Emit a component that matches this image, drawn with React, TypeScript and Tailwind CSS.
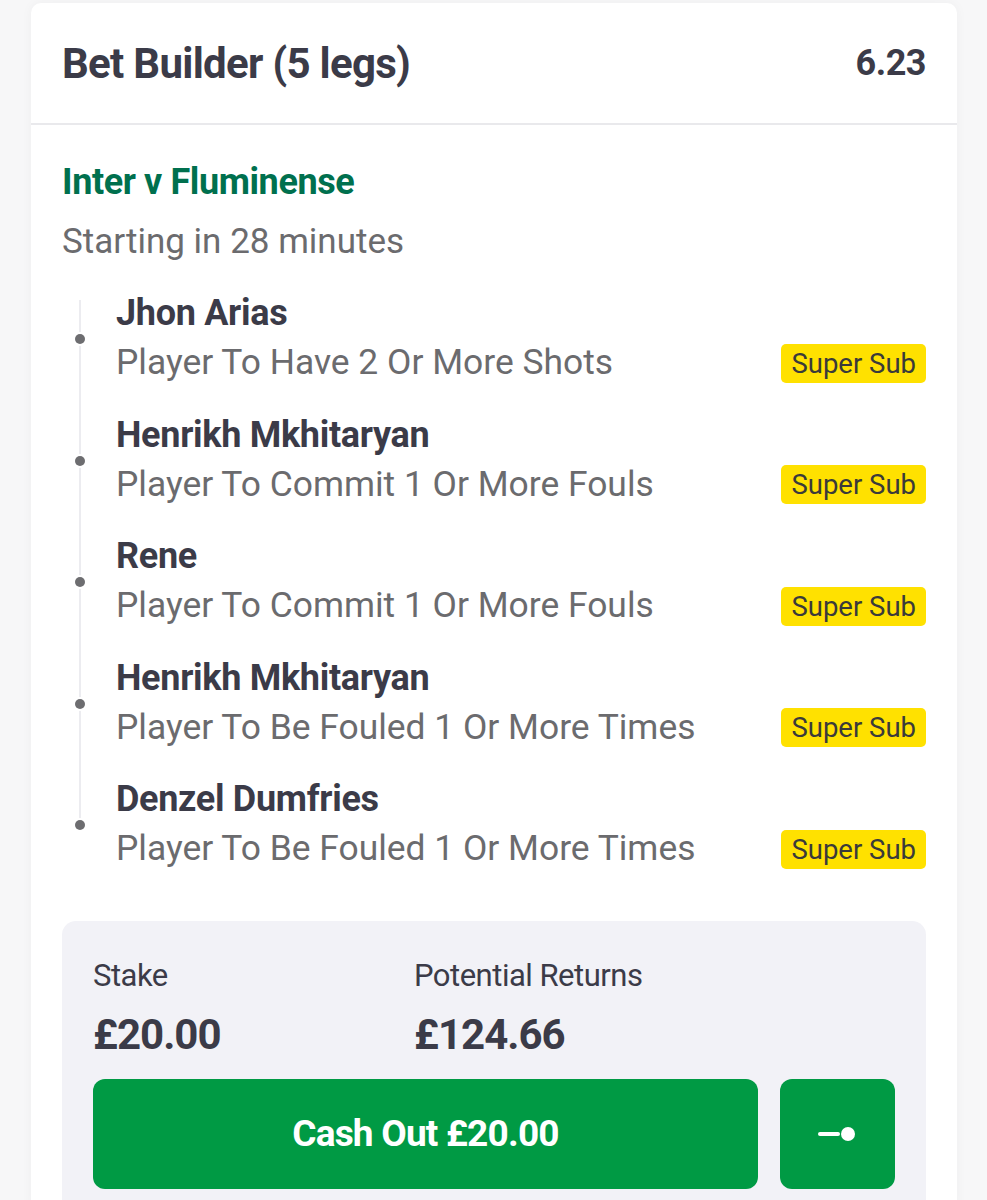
const legs = [
  { player: 'Jhon Arias', market: 'Player To Have 2 Or More Shots' },
  { player: 'Henrikh Mkhitaryan', market: 'Player To Commit 1 Or More Fouls' },
  { player: 'Rene', market: 'Player To Commit 1 Or More Fouls' },
  { player: 'Henrikh Mkhitaryan', market: 'Player To Be Fouled 1 Or More Times' },
  { player: 'Denzel Dumfries', market: 'Player To Be Fouled 1 Or More Times' },
];

function Leg({ player, market }: { player: string; market: string }) {
  return (
    <div className="relative h-[121.5px] pl-[54px]">
      {/* timeline dot */}
      <span className="absolute left-[13px] top-[43px] h-[10px] w-[10px] rounded-full bg-[#6d6d70] ring-2 ring-white" />
      <div className="flex h-[44px] items-center text-[36px] font-bold leading-none tracking-[-0.3px] text-[#3b3b48]">
        {player}
      </div>
      <div className="flex h-[56px] items-center justify-between">
        <span className="text-[35.4px] leading-none text-[#6b6b6e]">{market}</span>
        <span className="rounded-[5px] bg-[#ffe100] px-[10px] py-[6px] text-[27.5px] leading-[27px] text-[#3a3a3a]">
          Super Sub
        </span>
      </div>
    </div>
  );
}

export default function App() {
  return (
    <div
      className="min-h-[1200px] bg-[#f7f7f8] pt-[3px]"
      style={{ fontFamily: 'Roboto, "Noto Sans", sans-serif' }}
    >
      <div className="mx-[31px] w-[926px] overflow-hidden rounded-t-[10px] bg-white shadow-[0_0_12px_rgba(0,0,0,0.04)]">
        {/* header */}
        <div className="flex h-[122px] items-center justify-between border-b-2 border-[#e9e9ec] px-[31px]">
          <h1 className="text-[42px] font-bold tracking-[-0.7px] text-[#3b3b48]">Bet Builder (5 legs)</h1>
          <span className="text-[36px] font-bold tracking-[-0.5px] text-[#3b3b48]">6.23</span>
        </div>

        <div className="px-[31px] pt-[37px]">
          <div className="text-[36px] font-bold leading-[40px] tracking-[-0.4px] text-[#00704e]">Inter v Fluminense</div>
          <div className="mt-[20px] text-[35px] leading-[40px] text-[#6b6b6e]">Starting in 28 minutes</div>

          <div className="relative mt-[29px]">
            <span className="absolute left-[17px] top-[9px] h-[530px] w-[2px] bg-[#ececf0]" />
            {legs.map((leg, i) => (
              <Leg key={i} player={leg.player} market={leg.market} />
            ))}
          </div>

          {/* stake / returns */}
          <div className="mt-[22px] rounded-t-[14px] bg-[#f2f2f7] px-[31px] pt-[35px] pb-[20px]">
            <div className="flex">
              <div className="w-[321px]">
                <div className="text-[31px] leading-[40px] tracking-[-0.5px] text-[#3b3b48]">Stake</div>
                <div className="mt-[17px] text-[42px] font-bold leading-[44px] tracking-[-1px] text-[#3b3b48]">£20.00</div>
              </div>
              <div>
                <div className="text-[31px] leading-[40px] tracking-[-0.5px] text-[#3b3b48]">Potential Returns</div>
                <div className="mt-[17px] text-[42px] font-bold leading-[44px] tracking-[-1px] text-[#3b3b48]">£124.66</div>
              </div>
            </div>
            <div className="mt-[22px] flex gap-[22px]">
              <button className="flex h-[110px] flex-1 items-center justify-center rounded-[12px] bg-[#009a44] text-[37px] font-bold tracking-[-0.8px] text-white">
                Cash Out £20.00
              </button>
              <button className="flex h-[110px] w-[115px] items-center justify-center rounded-[12px] bg-[#009a44]">
                <svg width="44" height="16" viewBox="0 0 44 16">
                  <rect x="2" y="6" width="22" height="4" rx="2" fill="white" />
                  <circle cx="32" cy="8" r="7" fill="white" />
                </svg>
              </button>
            </div>
          </div>
        </div>
      </div>
    </div>
  );
}
